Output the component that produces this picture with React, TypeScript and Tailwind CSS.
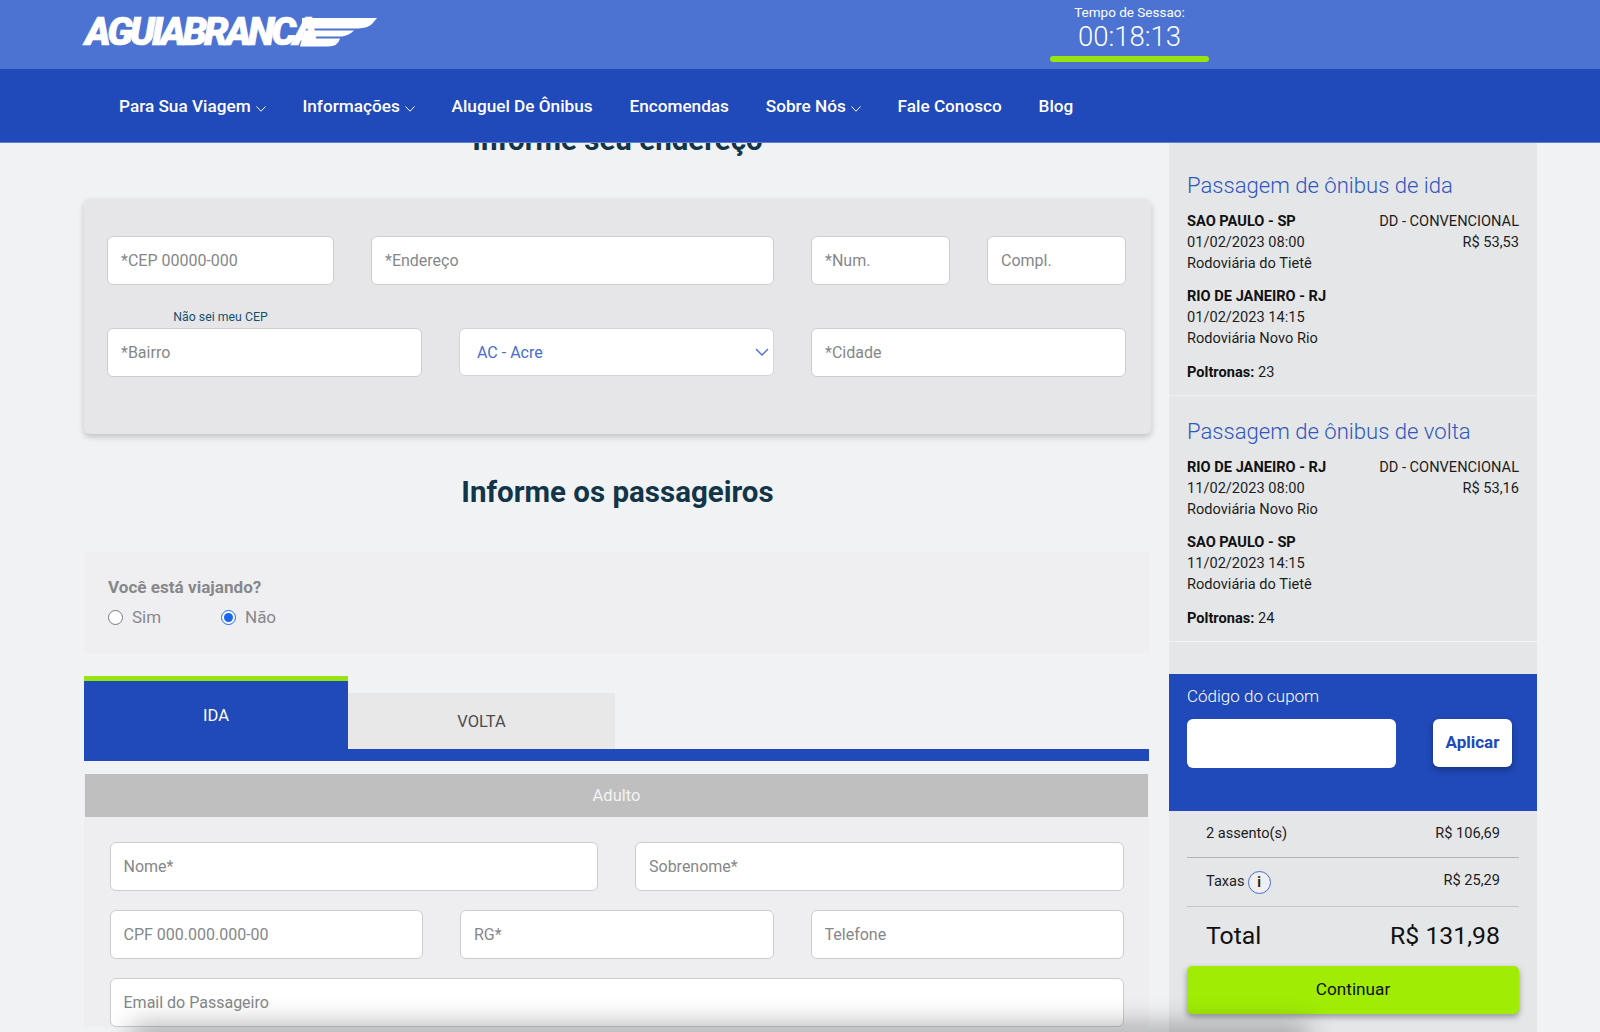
import React from "react";

const font = "font-['Roboto','Liberation_Sans',sans-serif]";

interface Stop {
  city: string;
  date: string;
  station: string;
}

interface Ticket {
  title: string;
  from: Stop;
  to: Stop;
  price: string;
  seat: string;
}

const tickets: Ticket[] = [
  {
    title: "Passagem de ônibus de ida",
    from: { city: "SAO PAULO - SP", date: "01/02/2023 08:00", station: "Rodoviária do Tietê" },
    to: { city: "RIO DE JANEIRO - RJ", date: "01/02/2023 14:15", station: "Rodoviária Novo Rio" },
    price: "R$ 53,53",
    seat: "23",
  },
  {
    title: "Passagem de ônibus de volta",
    from: { city: "RIO DE JANEIRO - RJ", date: "11/02/2023 08:00", station: "Rodoviária Novo Rio" },
    to: { city: "SAO PAULO - SP", date: "11/02/2023 14:15", station: "Rodoviária do Tietê" },
    price: "R$ 53,16",
    seat: "24",
  },
];

function Chevron() {
  return (
    <svg width="10" height="6" viewBox="0 0 10 6" fill="none" className="ml-[5px] mt-[5px]">
      <path d="M0.5 0.5 L5 5.2 L9.5 0.5" stroke="white" strokeWidth="1" />
    </svg>
  );
}

function Logo() {
  return (
    <div className="relative h-[30px] w-[294px]">
      <span className="block text-[39px] leading-[30px] font-black italic tracking-[-3.2px] text-white [-webkit-text-stroke:0.7px_white]">
        AGUIABRANCA
      </span>
      <svg width="90" height="30" viewBox="0 0 90 30" className="absolute left-[205px] top-0" fill="white">
        <path d="M12 1 H87 L82 7 Q78 11 68 11.5 H12 Z" />
        <path d="M14 13.5 H64 Q59 18.5 52 19.5 H14 Z" />
        <path d="M12 21.5 H50 Q48 29.5 38 29.5 H10 Z" />
      </svg>
    </div>
  );
}

function Field({ placeholder, className }: { placeholder: string; className: string }) {
  return (
    <input
      placeholder={placeholder}
      className={`h-[49px] rounded-[6px] border border-[#cdcdd0] bg-white px-[13px] text-[16px] outline-none placeholder:text-[#85878a] ${className}`}
    />
  );
}

function StopInfo({ stop }: { stop: Stop }) {
  return (
    <div>
      <p className="font-bold text-[#111]">{stop.city}</p>
      <p>{stop.date}</p>
      <p>{stop.station}</p>
    </div>
  );
}

function TicketCard({ ticket }: { ticket: Ticket }) {
  return (
    <div className="h-[246px] border-b border-[#f3f3f5] px-[18px] pt-[19px] text-[14.6px] leading-[21px] text-[#1d1d1f]">
      <h3 className="mb-[10px] text-[22.1px] leading-[32px] font-light text-[#2f57bd]">{ticket.title}</h3>
      <div className="flex justify-between">
        <StopInfo stop={ticket.from} />
        <div className="text-right">
          <p>DD - CONVENCIONAL</p>
          <p>{ticket.price}</p>
        </div>
      </div>
      <div className="mt-[12px]">
        <StopInfo stop={ticket.to} />
      </div>
      <p className="mt-[13px]">
        <span className="font-bold text-[#111]">Poltronas:</span> {ticket.seat}
      </p>
    </div>
  );
}

export default function App() {
  return (
    <div className={`flex h-[1032px] flex-col overflow-hidden bg-[#f1f2f4] ${font}`}>
      <header className="flex h-[69px] shrink-0 bg-[#4c72d2] pl-[85px] pt-[17px] text-white">
        <Logo />
        <div className="ml-[671px] -mt-[17px] flex w-[159px] flex-col items-center pt-[3px]">
          <p className="text-[13.5px] leading-[18px]">Tempo de Sessao:</p>
          <p className="text-[27.5px] leading-[32px] font-light">00:18:13</p>
          <div className="mt-[3px] h-[6px] w-full rounded-full bg-[#97e40f]" />
        </div>
      </header>

      <nav className="z-10 flex h-[74px] shrink-0 items-center gap-[36.8px] border-b border-[#5f7fd2] bg-[#2049b9] pl-[119px] pt-[2px] text-[17.2px] font-medium text-white">
        <a className="flex items-center">Para Sua Viagem<Chevron /></a>
        <a className="flex items-center">Informações<Chevron /></a>
        <a>Aluguel De Ônibus</a>
        <a>Encomendas</a>
        <a className="flex items-center">Sobre Nós<Chevron /></a>
        <a>Fale Conosco</a>
        <a>Blog</a>
      </nav>

      <div className="relative flex flex-1 overflow-hidden">
        <main className="w-[1169px] shrink-0 pl-[84px] pr-[18px]">
          <h2 className="-mt-[21px] text-center text-[29.5px] leading-[36px] font-bold text-[#12354a]">
            Informe seu endereço
          </h2>

          <section className="mt-[41px] h-[235px] rounded-[6px] bg-[#e6e6e8] px-[23px] pt-[37px] shadow-[0_3px_6px_rgba(0,0,0,0.2)]">
            <div className="flex gap-[37px]">
              <Field placeholder="*CEP 00000-000" className="w-[227px]" />
              <Field placeholder="*Endereço" className="w-[403px]" />
              <Field placeholder="*Num." className="w-[139px]" />
              <Field placeholder="Compl." className="w-[139px]" />
            </div>
            <p className="mb-[3px] mt-[24px] w-[227px] text-center text-[12.3px] leading-[16px] text-[#14506e]">
              Não sei meu CEP
            </p>
            <div className="flex items-start gap-[37px]">
              <Field placeholder="*Bairro" className="w-[315px]" />
              <div className="relative w-[315px]">
                <select className="h-[48px] w-full appearance-none rounded-[6px] border border-[#d5d5d8] bg-white pl-[17px] pt-[2px] text-[16px] text-[#4a6cd0] outline-none">
                  <option>AC - Acre</option>
                </select>
                <svg
                  width="14"
                  height="8"
                  viewBox="0 0 14 8"
                  fill="none"
                  className="pointer-events-none absolute right-[5px] top-[20px]"
                >
                  <path d="M1 1 L7 7 L13 1" stroke="#4a6cd0" strokeWidth="1.3" />
                </svg>
              </div>
              <Field placeholder="*Cidade" className="w-[315px]" />
            </div>
          </section>

          <h2 className="mt-[40px] text-center text-[29.5px] leading-[36px] font-bold text-[#12354a]">
            Informe os passageiros
          </h2>

          <section className="mt-[42px] h-[101px] w-[1065px] bg-[#efeff1] pl-[24px] pt-[23px]">
            <p className="text-[17.1px] leading-[24px] font-bold text-[#88888b]">Você está viajando?</p>
            <div className="mt-[6px] flex items-center text-[17px] leading-[24px] text-[#88888b]">
              <label className="flex w-[113px] items-center gap-[9px]">
                <input type="radio" name="viajando" className="m-0 h-[15px] w-[15px]" />
                Sim
              </label>
              <label className="flex items-center gap-[9px]">
                <input
                  type="radio"
                  name="viajando"
                  defaultChecked
                  className="m-0 h-[15px] w-[15px] accent-[#1a66f0]"
                />
                Não
              </label>
            </div>
          </section>

          <div className="mt-[23px] w-[1065px] border-b-[12px] border-[#2049b9]">
            <div className="flex h-[73px] items-end">
              <div className="h-[73px] w-[264px] border-t-[5px] border-[#97e40f] bg-[#2049b9] pt-[23px] text-center text-[16.5px] leading-[24px] text-white">
                IDA
              </div>
              <div className="h-[56px] w-[267px] bg-[#e8e8e9] pt-[17px] text-center text-[16.5px] leading-[24px] text-[#4d4d50]">
                VOLTA
              </div>
            </div>
          </div>

          <section className="mt-[13px] w-[1065px] bg-[#eeeef0]">
            <div className="mx-px flex h-[43px] items-center justify-center bg-[#c0bfc0] pt-[2px] text-[16.5px] text-[#f3f3f3]">
              Adulto
            </div>
            <div className="flex flex-col gap-[19px] pl-[25.5px] pt-[25px]">
              <div className="flex gap-[37px]">
                <Field placeholder="Nome*" className="w-[488.5px]" />
                <Field placeholder="Sobrenome*" className="w-[488.5px]" />
              </div>
              <div className="flex gap-[37px]">
                <Field placeholder="CPF 000.000.000-00" className="w-[313.5px]" />
                <Field placeholder="RG*" className="w-[313.5px]" />
                <Field placeholder="Telefone" className="w-[313.5px]" />
              </div>
              <Field placeholder="Email do Passageiro" className="w-[1014px]" />
            </div>
          </section>
        </main>

        <aside className="flex h-[890px] w-[368px] shrink-0 flex-col bg-[#e5e6e8] pt-[7px]">
          {tickets.map((ticket) => (
            <TicketCard key={ticket.title} ticket={ticket} />
          ))}

          <div className="mt-[32px] h-[137px] bg-[#2049b9] px-[18px] pt-[10px]">
            <p className="text-[17px] leading-[24px] font-light text-white">Código do cupom</p>
            <div className="mt-[11px] flex items-start">
              <input className="h-[49px] w-[209px] rounded-[6px] bg-white outline-none" />
              <button className="ml-[37px] h-[48px] w-[79px] rounded-[6px] bg-white text-[17px] font-bold text-[#2049b9] shadow-[0_3px_6px_rgba(0,0,0,0.3)]">
                Aplicar
              </button>
            </div>
          </div>

          <div className="px-[18px] text-[14.6px] text-[#1d1d1f]">
            <div className="flex h-[47px] items-center justify-between border-b border-[#b4b4b6] px-[19px]">
              <span>2 assento(s)</span>
              <span>R$ 106,69</span>
            </div>
            <div className="flex h-[49px] items-center justify-between border-b border-[#c6c6c8] px-[19px]">
              <span className="flex items-center gap-[3px]">
                Taxas
                <span className="flex h-[23px] w-[23px] items-center justify-center rounded-full border border-[#4a6cd0] bg-[#f0f0f4] text-[14px] font-bold">
                  i
                </span>
              </span>
              <span className="-mt-[3px]">R$ 25,29</span>
            </div>
            <div className="flex h-[59px] items-center justify-between px-[19px] pb-[2px] text-[24.8px] text-[#111]">
              <span>Total</span>
              <span>R$ 131,98</span>
            </div>
            <button className="h-[48px] w-full rounded-[5px] bg-[#a0ec05] text-[17.2px] text-[#111] shadow-[0_3px_6px_rgba(0,0,0,0.35)]">
              Continuar
            </button>
          </div>
        </aside>

        <div className="pointer-events-none absolute -bottom-[10px] left-[140px] h-[10px] w-[1160px] shadow-[0_0_26px_8px_rgba(0,0,0,0.3)]" />
      </div>
    </div>
  );
}
